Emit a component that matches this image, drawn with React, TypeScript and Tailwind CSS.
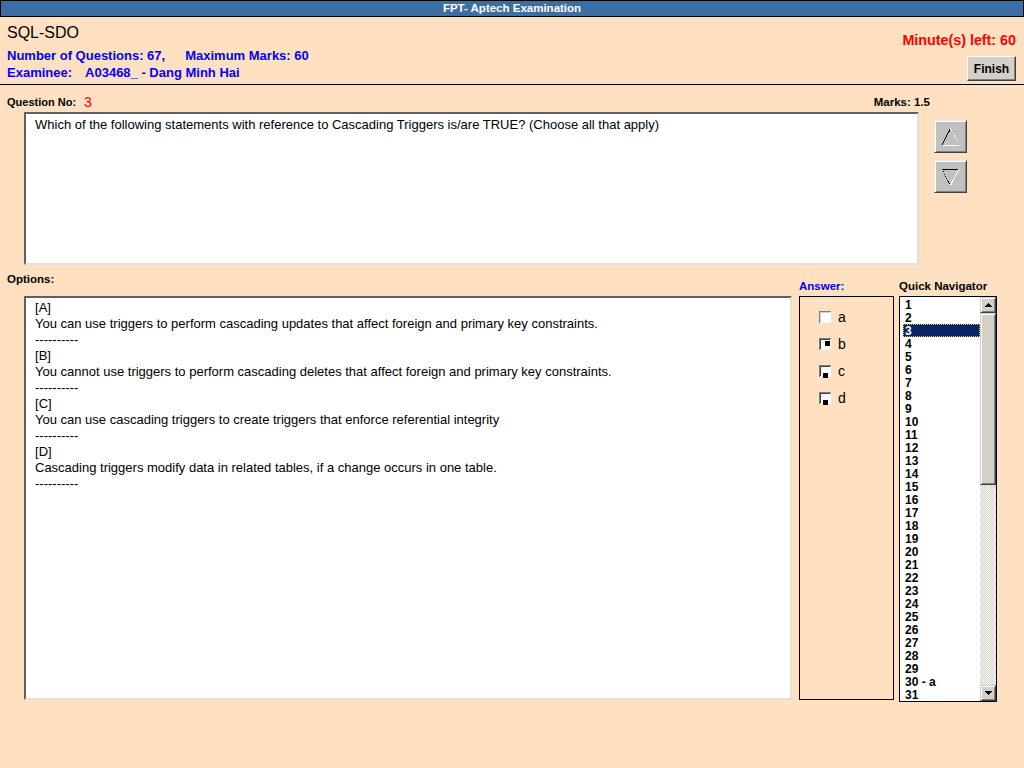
const font = "font-['Liberation_Sans',Arial,sans-serif]";

const options = [
  { key: "A", text: "You can use triggers to perform cascading updates that affect foreign and primary key constraints." },
  { key: "B", text: "You cannot use triggers to perform cascading deletes that affect foreign and primary key constraints." },
  { key: "C", text: "You can use cascading triggers to create triggers that enforce referential integrity" },
  { key: "D", text: "Cascading triggers modify data in related tables, if a change occurs in one table." },
];

const navItems = Array.from({ length: 31 }, (_, i) => (i + 1 === 30 ? "30 - a" : String(i + 1)));

// classic win98 checkbox, mark is drawn where the old app painted it
function CheckBox({ mark }: { mark: "none" | "center" | "bottom" }) {
  return (
    <svg width="13" height="13" viewBox="0 0 13 13" shapeRendering="crispEdges">
      <rect x="0" y="0" width="13" height="13" fill="#ffffff" />
      <rect x="0" y="0" width="12" height="1" fill="#808080" />
      <rect x="0" y="0" width="1" height="12" fill="#808080" />
      <rect x="1" y="1" width="10" height="1" fill={mark === "none" ? "#d4d0c8" : "#404040"} />
      <rect x="1" y="1" width="1" height="10" fill={mark === "none" ? "#d4d0c8" : "#404040"} />
      <rect x="12" y="0" width="1" height="13" fill="#ffe0c0" />
      <rect x="0" y="12" width="13" height="1" fill="#ffe0c0" />
      {mark === "center" && <rect x="6" y="3" width="5" height="5" fill="#000" />}
      {mark === "bottom" && <rect x="4" y="8" width="5" height="5" fill="#000" />}
    </svg>
  );
}

function ArrowButton({ dir }: { dir: "up" | "down" }) {
  return (
    <button className="w-[33px] h-[33px] bg-[#c0c0c0] border border-t-[#e8e8e8] border-l-[#e8e8e8] border-b-[#404040] border-r-[#404040] shadow-[inset_1px_1px_#ffffff,inset_-1px_-1px_#808080] flex items-center justify-center">
      <svg width="19" height="18" viewBox="0 0 19 18" shapeRendering="crispEdges">
        {dir === "up" ? (
          <>
            <line x1="9.5" y1="0.5" x2="1" y2="17" stroke="#000" strokeWidth="1" />
            <line x1="9.5" y1="0.5" x2="18" y2="17" stroke="#fff" strokeWidth="1" strokeDasharray="1 1" />
            <line x1="1" y1="17" x2="18" y2="17" stroke="#fff" strokeWidth="1" />
          </>
        ) : (
          <>
            <line x1="1" y1="1" x2="18" y2="1" stroke="#000" strokeWidth="1" />
            <line x1="1" y1="1" x2="9.5" y2="17.5" stroke="#000" strokeWidth="1" strokeDasharray="1 1" />
            <line x1="18" y1="1" x2="9.5" y2="17.5" stroke="#fff" strokeWidth="1" />
          </>
        )}
      </svg>
    </button>
  );
}

function ScrollArrow({ dir }: { dir: "up" | "down" }) {
  return (
    <div className="w-[16px] h-[16px] bg-[#d4d0c8] border border-t-[#d4d0c8] border-l-[#d4d0c8] border-b-[#404040] border-r-[#404040] shadow-[inset_1px_1px_#ffffff,inset_-1px_-1px_#808080] flex items-center justify-center">
      <svg width="7" height="4" viewBox="0 0 7 4" shapeRendering="crispEdges">
        {dir === "up" ? <path d="M3 0h1v1h1v1h1v1h1v1H0V3h1V2h1V1h1z" fill="#000" /> : <path d="M0 0h7v1H6v1H5v1H4v1H3V3H2V2H1V1H0z" fill="#000" />}
      </svg>
    </div>
  );
}

export default function App() {
  return (
    <div className={`w-[1024px] h-[768px] bg-[#ffe0c0] overflow-hidden flex flex-col ${font}`}>
      {/* title bar */}
      <div className="h-[17px] shrink-0 bg-[#3a6ea5] border border-black flex items-center justify-center">
        <span className="text-white text-[11.5px] font-bold leading-none">FPT- Aptech Examination</span>
      </div>

      {/* header */}
      <div className="h-[68px] shrink-0 border-b border-black flex justify-between pl-[7px] pr-[8px]">
        <div className="flex flex-col pt-[7px]">
          <div className="text-[16px] leading-[18px] text-black">SQL-SDO</div>
          <div className="mt-[5px] text-[13px] font-bold leading-[17px] text-[#0000ff]">
            Number of Questions: 67,<span className="ml-[20px]">Maximum Marks: 60</span>
          </div>
          <div className="text-[13px] font-bold leading-[17px] text-[#0000ff]">
            Examinee:<span className="ml-[13px]">A03468_ - Dang Minh Hai</span>
          </div>
        </div>
        <div className="flex flex-col items-end pt-[15px]">
          <div className="text-[14.3px] font-bold leading-[16px] text-[#ff0000]">Minute(s) left: 60</div>
          <button className="mt-[8px] w-[49px] h-[25px] bg-[#d4d0c8] border border-t-[#ffffff] border-l-[#ffffff] border-b-[#404040] border-r-[#404040] shadow-[inset_-1px_-1px_#808080] text-[12px] font-bold text-black">
            Finish
          </button>
        </div>
      </div>

      {/* question */}
      <div className="w-[930px] flex justify-between items-center pl-[7px] pt-[11px]">
        <div className="flex items-center h-[12px]">
          <span className="text-[11px] font-bold leading-[12px] text-black">Question No:</span>
          <span className="ml-[8px] text-[14px] leading-[12px] text-[#ff0000]">3</span>
        </div>
        <span className="text-[11.5px] font-bold leading-[12px] text-black">Marks: 1.5</span>
      </div>

      <div className="flex mt-[4px]">
        <div className="ml-[24px] w-[895px] h-[153px] bg-white border-2 border-t-[#606060] border-l-[#606060] border-b-[#e4e0d8] border-r-[#e4e0d8] pl-[9px] pt-[3px] text-[13px] leading-[16px] text-black">
          Which of the following statements with reference to Cascading Triggers is/are TRUE? (Choose all that apply)
        </div>
        <div className="ml-[15px] mt-[8px] flex flex-col gap-[7px]">
          <ArrowButton dir="up" />
          <ArrowButton dir="down" />
        </div>
      </div>

      {/* options / answer / navigator */}
      <div className="flex">
        <div className="w-[792px] flex flex-col">
          <div className="h-[31px] pl-[7px] pt-[8px] text-[11.5px] font-bold leading-[12px] text-black">Options:</div>
          <div className="ml-[24px] w-[768px] h-[404px] bg-white border-2 border-t-[#606060] border-l-[#606060] border-b-[#e4e0d8] border-r-[#e4e0d8] pl-[9px] pt-[2px] text-[13px] leading-[16px] text-black">
            {options.map((o) => (
              <div key={o.key}>
                <div>[{o.key}]</div>
                <div>{o.text}</div>
                <div>----------</div>
              </div>
            ))}
          </div>
        </div>

        <div className="ml-[7px] w-[95px] flex flex-col">
          <div className="h-[31px] pt-[15px] text-[11.5px] font-bold leading-[12px] text-[#0000ff]">Answer:</div>
          <div className="h-[404px] border border-black pl-[19px] pt-[14px] flex flex-col gap-[14px]">
            {([
              ["a", "none"],
              ["b", "center"],
              ["c", "bottom"],
              ["d", "bottom"],
            ] as const).map(([l, m]) => (
              <div key={l} className="flex items-center h-[13px]">
                <CheckBox mark={m} />
                <span className="ml-[6px] text-[14px] leading-[13px] text-black">{l}</span>
              </div>
            ))}
          </div>
        </div>

        <div className="ml-[5px] w-[98px] flex flex-col">
          <div className="h-[31px] pt-[15px] text-[11.5px] font-bold leading-[12px] text-black whitespace-nowrap">Quick Navigator</div>
          <div className="h-[406px] border border-black bg-white flex">
            <div className="w-[80px] h-[404px] overflow-hidden pl-[3px] pt-[1px]">
              {navItems.map((n) => (
                <div
                  key={n}
                  className={
                    n === "3"
                      ? "h-[13px] pl-[2px] bg-[#0a246a] text-white outline-1 outline-dotted outline-[#d4c080] -outline-offset-1 text-[12px] font-bold leading-[14px]"
                      : "h-[13px] pl-[2px] text-black text-[12px] font-bold leading-[14px]"
                  }
                >
                  {n}
                </div>
              ))}
            </div>
            <div className="w-[16px] h-[404px] flex flex-col">
              <ScrollArrow dir="up" />
              <div className="h-[172px] bg-[#d4d0c8] border border-t-[#d4d0c8] border-l-[#d4d0c8] border-b-[#404040] border-r-[#404040] shadow-[inset_1px_1px_#ffffff,inset_-1px_-1px_#808080]" />
              <div className="flex-1 bg-[image:repeating-conic-gradient(#d4d0c8_0_25%,#ffffff_0_50%)] bg-[length:2px_2px]" />
              <ScrollArrow dir="down" />
            </div>
          </div>
        </div>
      </div>
    </div>
  );
}
